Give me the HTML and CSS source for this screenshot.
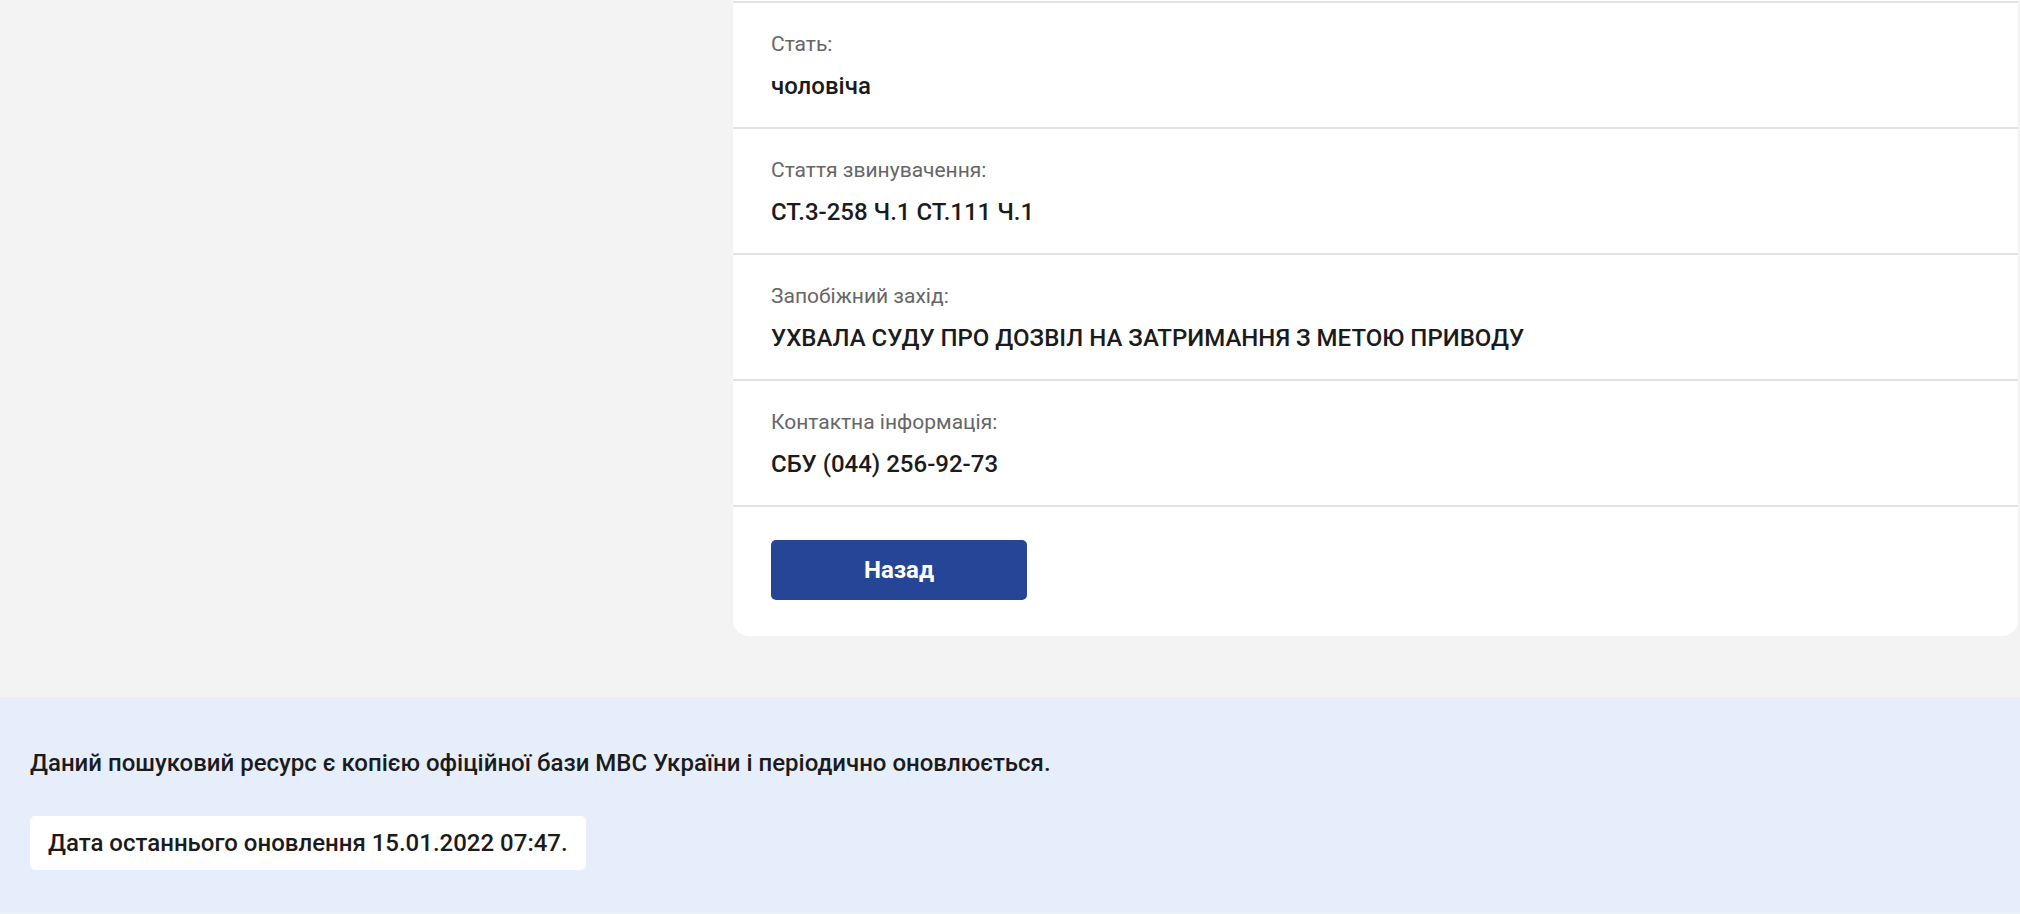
FILE: index.html
```html
<!DOCTYPE html>
<html lang="uk">
<head>
    <meta charset="UTF-8">
    <meta name="viewport" content="width=device-width, initial-scale=1.0">
    <title>Розшук осіб</title>
    <link rel="stylesheet" href="styles.css">
</head>
<body>
    <main class="page">
        <aside class="sidebar"></aside>
        <section class="card">
            <div class="row">
                <div class="row-label">Стать:</div>
                <div class="row-value">чоловіча</div>
            </div>
            <div class="row">
                <div class="row-label">Стаття звинувачення:</div>
                <div class="row-value">СТ.3-258 Ч.1 СТ.111 Ч.1</div>
            </div>
            <div class="row">
                <div class="row-label">Запобіжний захід:</div>
                <div class="row-value">УХВАЛА СУДУ ПРО ДОЗВІЛ НА ЗАТРИМАННЯ З МЕТОЮ ПРИВОДУ</div>
            </div>
            <div class="row">
                <div class="row-label">Контактна інформація:</div>
                <div class="row-value">СБУ (044) 256-92-73</div>
            </div>
            <div class="row row-actions">
                <button type="button" class="back-btn" onclick="history.back()">Назад</button>
            </div>
        </section>
    </main>
    <footer class="footer">
        <p class="footer-note">Даний пошуковий ресурс є копією офіційної бази МВС України і періодично оновлюється.</p>
        <div class="footer-date">Дата останнього оновлення 15.01.2022 07:47.</div>
    </footer>
</body>
</html>
```

FILE: styles.css
```css
body {
    font-family: Roboto, "Noto Sans", Arial, sans-serif;
    background-color: #f3f3f3;
    color: #1b1b1b;
    margin: 0;
}
.page {
    display: grid;
    grid-template-columns: 733px 1fr;
    padding-right: 2px;
    padding-bottom: 61px;
}
.card {
    background-color: #fff;
    padding-top: 1px;
    border-radius: 0 0 16px 16px;
}
.row {
    border-top: 2px solid #e2e2e2;
    padding: 29px 38px 27px;
}
.row-label {
    font-size: 21px;
    line-height: 24px;
    color: #666;
    margin-bottom: 16px;
}
.row-value {
    font-size: 24px;
    line-height: 28px;
    font-weight: 500;
    color: #1b1b1b;
}
.row-actions {
    padding-top: 33px;
    padding-bottom: 36px;
}
.back-btn {
    display: block;
    width: 256px;
    height: 60px;
    background-color: #254696;
    color: #fff;
    border: none;
    border-radius: 5px;
    font-family: inherit;
    font-size: 24px;
    font-weight: 700;
    cursor: pointer;
}
.back-btn:hover {
    background-color: #1d3a80;
}
.footer {
    background-color: #e6eefc;
    padding: 52px 30px 43px;
}
.footer-note {
    margin: 0 0 39px;
    font-size: 24px;
    line-height: 28px;
    font-weight: 500;
    color: #1b1b1b;
}
.footer-date {
    display: inline-block;
    background-color: #fff;
    border-radius: 5px;
    padding: 13px 18px;
    font-size: 24px;
    line-height: 28px;
    font-weight: 500;
}
```
